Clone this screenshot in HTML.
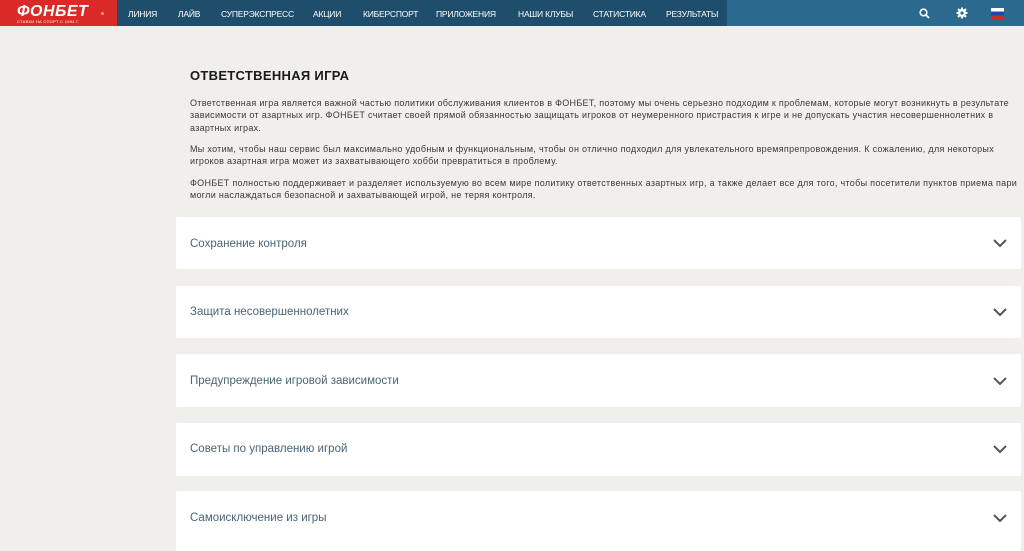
<!DOCTYPE html>
<html><head><meta charset="utf-8"><style>
*{margin:0;padding:0;box-sizing:border-box}
body{width:1024px;height:544px;overflow:hidden;background:#f1efec;font-family:"Liberation Sans",sans-serif;position:relative}
.nav{position:absolute;top:0;left:0;width:1024px;height:26px;background:#2b6a8e}
.logo{position:absolute;left:0;top:0;width:117px;height:26px;background:#d92a27;color:#fff}
.logo b{position:absolute;left:17px;top:3px;font-size:16px;font-style:italic;font-weight:900;letter-spacing:0.5px}
.logo i{position:absolute;left:17px;top:19px;font-size:4px;font-style:normal;letter-spacing:.3px;white-space:nowrap}
.logo u{position:absolute;left:101px;top:12px;width:3px;height:3px;border-radius:50%;background:#f4a23a}
.items{position:absolute;left:117px;top:0;width:610px;height:26px;background:#1e4e6c}
.items span{position:absolute;top:9px;color:#fff;font-size:8.5px;white-space:nowrap;letter-spacing:-.2px}
.card{position:absolute;left:176px;width:845px;background:#fff;border-radius:2px}
.card span{position:absolute;left:14px;font-size:11.5px;color:#4a6576}
.card svg{position:absolute;right:14px}
h1{position:absolute;left:190px;top:68px;font-size:13px;color:#1a1a1a;letter-spacing:.3px}
p{position:absolute;left:190px;width:822px;font-size:9px;letter-spacing:.3px;line-height:12.4px;color:#3a3a3a}
</style></head><body>
<div class="nav">
<div class="logo"><b>ФОНБЕТ</b><i>СТАВКИ НА СПОРТ С 1994 Г.</i><u></u></div>
<div class="items"><span style="left:11px">ЛИНИЯ</span><span style="left:61px">ЛАЙВ</span><span style="left:104px">СУПЕРЭКСПРЕСС</span><span style="left:196px">АКЦИИ</span><span style="left:246px">КИБЕРСПОРТ</span><span style="left:319px">ПРИЛОЖЕНИЯ</span><span style="left:401px">НАШИ КЛУБЫ</span><span style="left:476px">СТАТИСТИКА</span><span style="left:549px">РЕЗУЛЬТАТЫ</span></div>
<svg style="position:absolute;left:919px;top:8px" width="11" height="11" viewBox="0 0 11 11"><circle cx="4.5" cy="4.5" r="3.3" fill="none" stroke="#fff" stroke-width="1.6"/><path d="M7 7L10 10" stroke="#fff" stroke-width="1.8"/></svg>
<svg style="position:absolute;left:956px;top:7px" width="12" height="12" viewBox="0 0 12 12"><circle cx="6" cy="6" r="4" fill="#fff"/><path d="M6 0.5V11.5M0.5 6H11.5M2 2L10 10M10 2L2 10" stroke="#fff" stroke-width="2"/><circle cx="6" cy="6" r="1.6" fill="#2b6a8e"/></svg>
<div style="position:absolute;left:991px;top:8px;width:13px;height:11px;background:linear-gradient(#fff 0 33%,#2146b0 33% 66%,#d52b1e 66%)"></div>
</div>
<h1>ОТВЕТСТВЕННАЯ ИГРА</h1>
<p style="top:97px">Ответственная игра является важной частью политики обслуживания клиентов в ФОНБЕТ, поэтому мы очень серьезно подходим к проблемам, которые могут возникнуть в результате зависимости от азартных игр. ФОНБЕТ считает своей прямой обязанностью защищать игроков от неумеренного пристрастия к игре и не допускать участия несовершеннолетних в азартных играх.</p>
<p style="top:143px">Мы хотим, чтобы наш сервис был максимально удобным и функциональным, чтобы он отлично подходил для увлекательного времяпрепровождения. К сожалению, для некоторых игроков азартная игра может из захватывающего хобби превратиться в проблему.</p>
<p style="top:177px;width:832px">ФОНБЕТ полностью поддерживает и разделяет используемую во всем мире политику ответственных азартных игр, а также делает все для того, чтобы посетители пунктов приема пари могли наслаждаться безопасной и захватывающей игрой, не теряя контроля.</p>
<div class="card" style="top:217px;height:52px"><span style="top:21px">Сохранение контроля</span><svg style="top:22px" width="14" height="9" viewBox="0 0 14 9"><path d="M1 1L7 7L13 1" fill="none" stroke="#555" stroke-width="2"/></svg></div>
<div class="card" style="top:286px;height:52px"><span style="top:20px">Защита несовершеннолетних</span><svg style="top:22px" width="14" height="9" viewBox="0 0 14 9"><path d="M1 1L7 7L13 1" fill="none" stroke="#555" stroke-width="2"/></svg></div>
<div class="card" style="top:354px;height:53px"><span style="top:21px">Предупреждение игровой зависимости</span><svg style="top:23px" width="14" height="9" viewBox="0 0 14 9"><path d="M1 1L7 7L13 1" fill="none" stroke="#555" stroke-width="2"/></svg></div>
<div class="card" style="top:423px;height:53px"><span style="top:20px">Советы по управлению игрой</span><svg style="top:22px" width="14" height="9" viewBox="0 0 14 9"><path d="M1 1L7 7L13 1" fill="none" stroke="#555" stroke-width="2"/></svg></div>
<div class="card" style="top:491px;height:60px"><span style="top:21px">Самоисключение из игры</span><svg style="top:23px" width="14" height="9" viewBox="0 0 14 9"><path d="M1 1L7 7L13 1" fill="none" stroke="#555" stroke-width="2"/></svg></div>
</body></html>
